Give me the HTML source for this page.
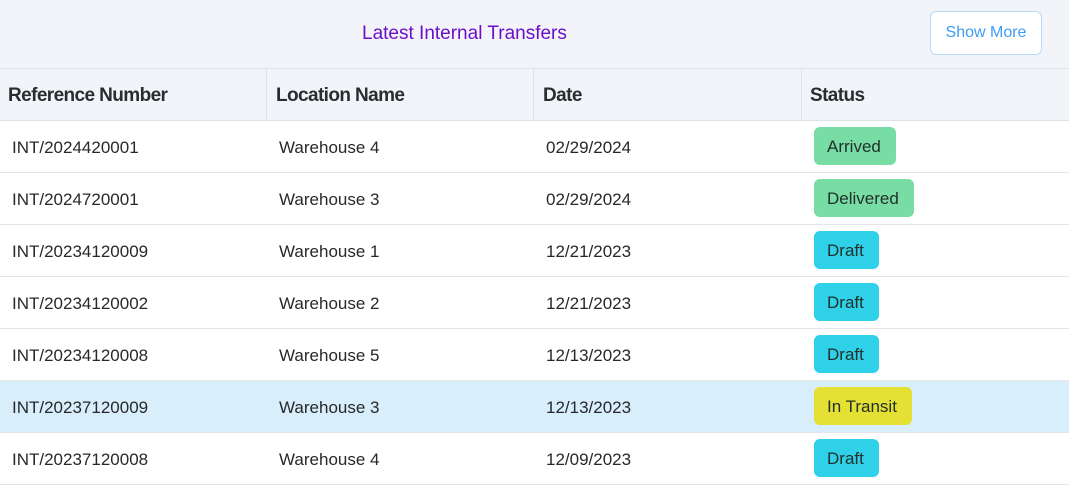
<!DOCTYPE html>
<html><head><style>
body{margin:0;width:1069px;height:487px;background:#fff;font-family:"Liberation Sans",sans-serif;overflow:hidden;position:relative}
.top{position:absolute;left:0;top:0;width:1069px;height:68px;background:#f3f4f9;border-bottom:1px solid #dfe1e6}
.title{position:absolute;left:362px;top:23px;font-size:19px;color:#6a0fc9}
.btn{position:absolute;left:930px;top:11px;width:112px;height:44px;box-sizing:border-box;border:1px solid #b9d9fb;border-radius:6px;background:#fff;color:#3d9cf5;font-size:16px;text-align:center;line-height:42px}
.hdr{position:absolute;left:0;top:69px;width:1069px;height:51px;background:#f3f4f9;border-bottom:1px solid #dfe1e6}
.h{position:absolute;top:16px;font-size:19px;font-weight:bold;color:#2a2c2f;letter-spacing:-0.6px}
.vl{position:absolute;top:0;width:1px;height:51px;background:#dfe1e6}
.row{position:absolute;left:0;width:1069px;height:51px;border-bottom:1px solid #e3e5e8}
.c{position:absolute;top:17px;font-size:17px;color:#26282b}
.b{position:absolute;left:814px;top:6px;height:38px;line-height:40px;padding:0 15px 0 13px;border-radius:6px;font-size:17px;color:#22302a}
.g{background:#78dca5}.cy{background:#2ed1e8}.y{background:#e5e034}
</style></head><body>
<div class="top"><div class="title">Latest Internal Transfers</div><div class="btn">Show More</div></div>
<div class="hdr">
<div class="h" style="left:8px">Reference Number</div>
<div class="vl" style="left:266px"></div><div class="h" style="left:276px">Location Name</div>
<div class="vl" style="left:533px"></div><div class="h" style="left:543px">Date</div>
<div class="vl" style="left:801px"></div><div class="h" style="left:810px">Status</div>
</div>
<div class="row" style="top:121px"><div class="c" style="left:12px">INT/2024420001</div><div class="c" style="left:279px">Warehouse 4</div><div class="c" style="left:546px">02/29/2024</div><div class="b g">Arrived</div></div>
<div class="row" style="top:173px"><div class="c" style="left:12px">INT/2024720001</div><div class="c" style="left:279px">Warehouse 3</div><div class="c" style="left:546px">02/29/2024</div><div class="b g">Delivered</div></div>
<div class="row" style="top:225px"><div class="c" style="left:12px">INT/20234120009</div><div class="c" style="left:279px">Warehouse 1</div><div class="c" style="left:546px">12/21/2023</div><div class="b cy">Draft</div></div>
<div class="row" style="top:277px"><div class="c" style="left:12px">INT/20234120002</div><div class="c" style="left:279px">Warehouse 2</div><div class="c" style="left:546px">12/21/2023</div><div class="b cy">Draft</div></div>
<div class="row" style="top:329px"><div class="c" style="left:12px">INT/20234120008</div><div class="c" style="left:279px">Warehouse 5</div><div class="c" style="left:546px">12/13/2023</div><div class="b cy">Draft</div></div>
<div class="row" style="top:381px;background:#d9eefb"><div class="c" style="left:12px">INT/20237120009</div><div class="c" style="left:279px">Warehouse 3</div><div class="c" style="left:546px">12/13/2023</div><div class="b y">In Transit</div></div>
<div class="row" style="top:433px"><div class="c" style="left:12px">INT/20237120008</div><div class="c" style="left:279px">Warehouse 4</div><div class="c" style="left:546px">12/09/2023</div><div class="b cy">Draft</div></div>
</body></html>
